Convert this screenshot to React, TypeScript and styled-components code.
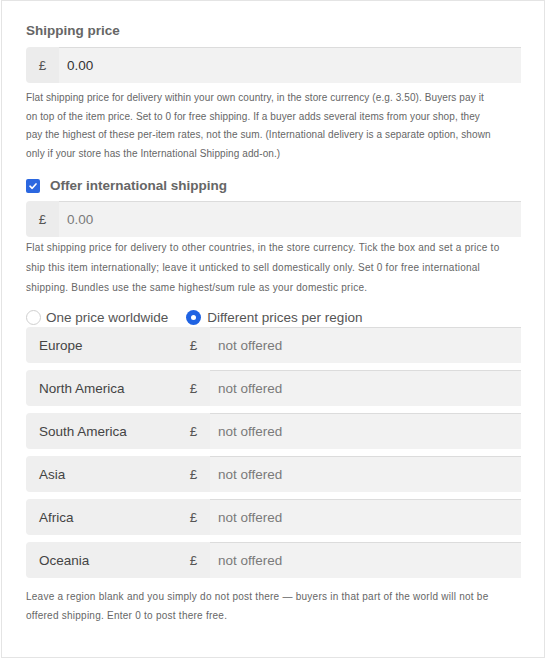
import React from 'react';
import styled, { createGlobalStyle } from 'styled-components';

const GlobalStyle = createGlobalStyle`
  html, body {
    margin: 0;
    padding: 0;
    background: #ffffff;
  }
  body {
    font-family: "Liberation Sans", Arial, sans-serif;
  }
`;

const Card = styled.div`
  box-sizing: border-box;
  width: 544px;
  height: 658px;
  margin-left: 1px;
  padding: 20px 23px 0 24px;
  border: 1px solid #e4e4e4;
  background: #ffffff;
`;

const Heading = styled.div`
  font-size: 13.5px;
  line-height: 20px;
  font-weight: 700;
  color: #666666;
`;

const Field = styled.div<{ $top: number }>`
  display: flex;
  height: 36px;
  margin-top: ${(p) => p.$top}px;
`;

const Addon = styled.div`
  width: 33px;
  flex-shrink: 0;
  display: flex;
  align-items: center;
  justify-content: center;
  background: #ececec;
  border-radius: 4px 0 0 4px;
  font-size: 13.5px;
  color: #555555;
`;

const Input = styled.div<{ $muted?: boolean }>`
  flex: 1;
  display: flex;
  align-items: center;
  padding-left: 8px;
  background: #f2f2f2;
  box-shadow: inset 0 1px 0 #dcdcdc;
  font-size: 13.5px;
  color: ${(p) => (p.$muted ? '#7a7a7a' : '#333333')};
`;

const Help = styled.p<{ $top: number; $lh?: number; $ls?: number }>`
  margin: ${(p) => p.$top}px 0 0;
  font-size: 10px;
  letter-spacing: ${(p) => p.$ls ?? 0.15}px;
  line-height: ${(p) => p.$lh ?? 18.5}px;
  color: #666666;
  white-space: nowrap;
`;

const CheckRow = styled.label`
  display: flex;
  align-items: center;
  gap: 10px;
  height: 20px;
  margin-top: 13px;
`;

const CheckBox = styled.span`
  width: 14px;
  height: 14px;
  border-radius: 2px;
  background: #2b67e0;
  display: flex;
  align-items: center;
  justify-content: center;
`;

const RadioRow = styled.div`
  display: flex;
  align-items: center;
  height: 20px;
  margin-top: 9px;
  gap: 18px;
`;

const RadioOption = styled.label<{ $gap: number }>`
  display: flex;
  align-items: center;
  gap: ${(p) => p.$gap}px;
  font-size: 13.5px;
  color: #555555;
`;

const RadioDot = styled.span<{ $on?: boolean }>`
  box-sizing: border-box;
  width: 15px;
  height: 15px;
  border-radius: 50%;
  background: ${(p) => (p.$on ? '#1f63e3' : '#ffffff')};
  border: ${(p) => (p.$on ? 'none' : '1px solid #cfcfcf')};
  display: flex;
  align-items: center;
  justify-content: center;

  &::after {
    content: '';
    display: ${(p) => (p.$on ? 'block' : 'none')};
    width: 5px;
    height: 5px;
    border-radius: 50%;
    background: #ffffff;
  }
`;

const Regions = styled.div`
  display: flex;
  flex-direction: column;
  gap: 7px;
`;

const RegionRow = styled.div`
  display: flex;
  height: 36px;
`;

const RegionName = styled.div`
  width: 138px;
  flex-shrink: 0;
  display: flex;
  align-items: center;
  padding-left: 13px;
  background: #efefef;
  border-radius: 4px 0 0 4px;
  font-size: 13.5px;
  color: #444444;
`;

const RegionAddon = styled(Addon)`
  border-radius: 0;
  background: #efefef;
`;

const regions = ['Europe', 'North America', 'South America', 'Asia', 'Africa', 'Oceania'];

export default function App() {
  return (
    <>
      <GlobalStyle />
      <Card>
        <Heading>Shipping price</Heading>
        <Field $top={6}>
          <Addon>£</Addon>
          <Input>0.00</Input>
        </Field>
        <Help $top={6} $ls={0.1}>
          Flat shipping price for delivery within your own country, in the store currency (e.g. 3.50). Buyers pay it
          <br />
          on top of the item price. Set to 0 for free shipping. If a buyer adds several items from your shop, they
          <br />
          pay the highest of these per-item rates, not the sum. (International delivery is a separate option, shown
          <br />
          only if your store has the International Shipping add-on.)
        </Help>

        <CheckRow>
          <CheckBox>
            <svg width="10" height="10" viewBox="0 0 10 10" fill="none">
              <path d="M2 5.2 L4.2 7.3 L8 2.9" stroke="#ffffff" strokeWidth="1.6" strokeLinecap="round" strokeLinejoin="round" />
            </svg>
          </CheckBox>
          <Heading>Offer international shipping</Heading>
        </CheckRow>
        <Field $top={5}>
          <Addon>£</Addon>
          <Input $muted>0.00</Input>
        </Field>
        <Help $top={1} $lh={20} $ls={0.25}>
          Flat shipping price for delivery to other countries, in the store currency. Tick the box and set a price to
          <br />
          ship this item internationally; leave it unticked to sell domestically only. Set 0 for free international
          <br />
          shipping. Bundles use the same highest/sum rule as your domestic price.
        </Help>

        <RadioRow>
          <RadioOption $gap={5}>
            <RadioDot />
            One price worldwide
          </RadioOption>
          <RadioOption $gap={6}>
            <RadioDot $on />
            Different prices per region
          </RadioOption>
        </RadioRow>

        <Regions>
          {regions.map((name) => (
            <RegionRow key={name}>
              <RegionName>{name}</RegionName>
              <RegionAddon>£</RegionAddon>
              <Input $muted>not offered</Input>
            </RegionRow>
          ))}
        </Regions>

        <Help $top={10} $ls={0.25}>
          Leave a region blank and you simply do not post there — buyers in that part of the world will not be
          <br />
          offered shipping. Enter 0 to post there free.
        </Help>
      </Card>
    </>
  );
}
